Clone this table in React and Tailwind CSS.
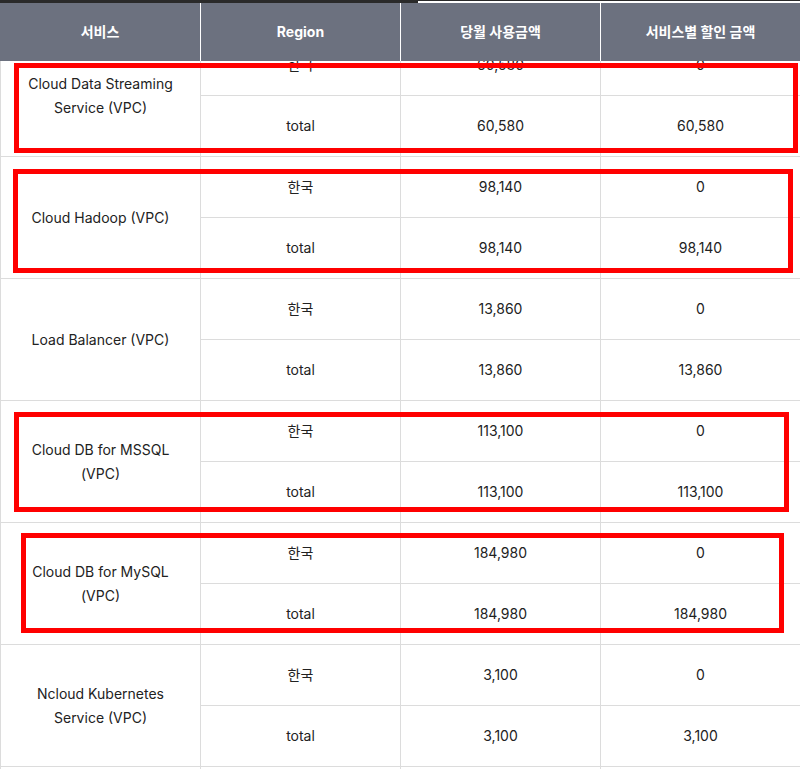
import React from "react";

const rows = [
  { name: "Cloud Data Streaming Service (VPC)", amount: "60,580" },
  { name: "Cloud Hadoop (VPC)", amount: "98,140" },
  { name: "Load Balancer (VPC)", amount: "13,860" },
  { name: "Cloud DB for MSSQL (VPC)", amount: "113,100" },
  { name: "Cloud DB for MySQL (VPC)", amount: "184,980" },
  { name: "Ncloud Kubernetes Service (VPC)", amount: "3,100" },
  { name: "", amount: "" },
];

// red highlight boxes drawn over the table
const marks = [
  "left-[14px] top-[63px] w-[784px] h-[90px]",
  "left-[13px] top-[169px] w-[780px] h-[104px]",
  "left-[14px] top-[412px] w-[775px] h-[100px]",
  "left-[21px] top-[533px] w-[763px] h-[100px]",
];

const Cell = ({ children }) => (
  <div className="w-[200px] border-l border-[#dcdcdc] flex items-center justify-center">
    {children}
  </div>
);

const App = () => {
  return (
    <div
      className="relative w-[800px] h-[769px] overflow-hidden bg-white text-[#222] text-sm"
      style={{ fontFamily: '"Inter", "Noto Sans CJK KR", sans-serif' }}
    >
      <div className="mt-[35px]">
        {rows.map((row, i) => (
          <div key={i} className="flex h-[122px] border-b border-[#dcdcdc]">
            <div className="w-[200px] border-l border-[#dcdcdc] flex items-center justify-center text-center px-4 leading-6">
              {row.name}
            </div>
            <div className="flex flex-col">
              <div className="flex h-[61px] border-b border-[#dcdcdc]">
                <Cell>{row.name && "한국"}</Cell>
                <Cell>{row.amount}</Cell>
                <Cell>{row.name && "0"}</Cell>
              </div>
              <div className="flex flex-1">
                <Cell>{row.name && "total"}</Cell>
                <Cell>{row.amount}</Cell>
                <Cell>{row.amount}</Cell>
              </div>
            </div>
          </div>
        ))}
      </div>

      <div className="absolute top-0 left-0 w-full">
        <div className="relative h-[3px] bg-white">
          <div className="h-px bg-[#2a2a2a]" />
          <div className="absolute left-0 top-0 w-[418px] h-[3px] bg-[#2a2a2a]" />
        </div>
        <div className="flex h-[58px] bg-[#6c717f] text-white font-bold">
          <div className="w-[200px] flex items-center justify-center">서비스</div>
          <div className="w-[200px] border-l border-white flex items-center justify-center">Region</div>
          <div className="w-[200px] border-l border-white flex items-center justify-center">당월 사용금액</div>
          <div className="w-[200px] border-l border-white flex items-center justify-center">서비스별 할인 금액</div>
        </div>
      </div>

      {marks.map((m, i) => (
        <div key={i} className={`absolute border-[5px] border-[#ff0000] ${m}`} />
      ))}
    </div>
  );
};

export default App;
